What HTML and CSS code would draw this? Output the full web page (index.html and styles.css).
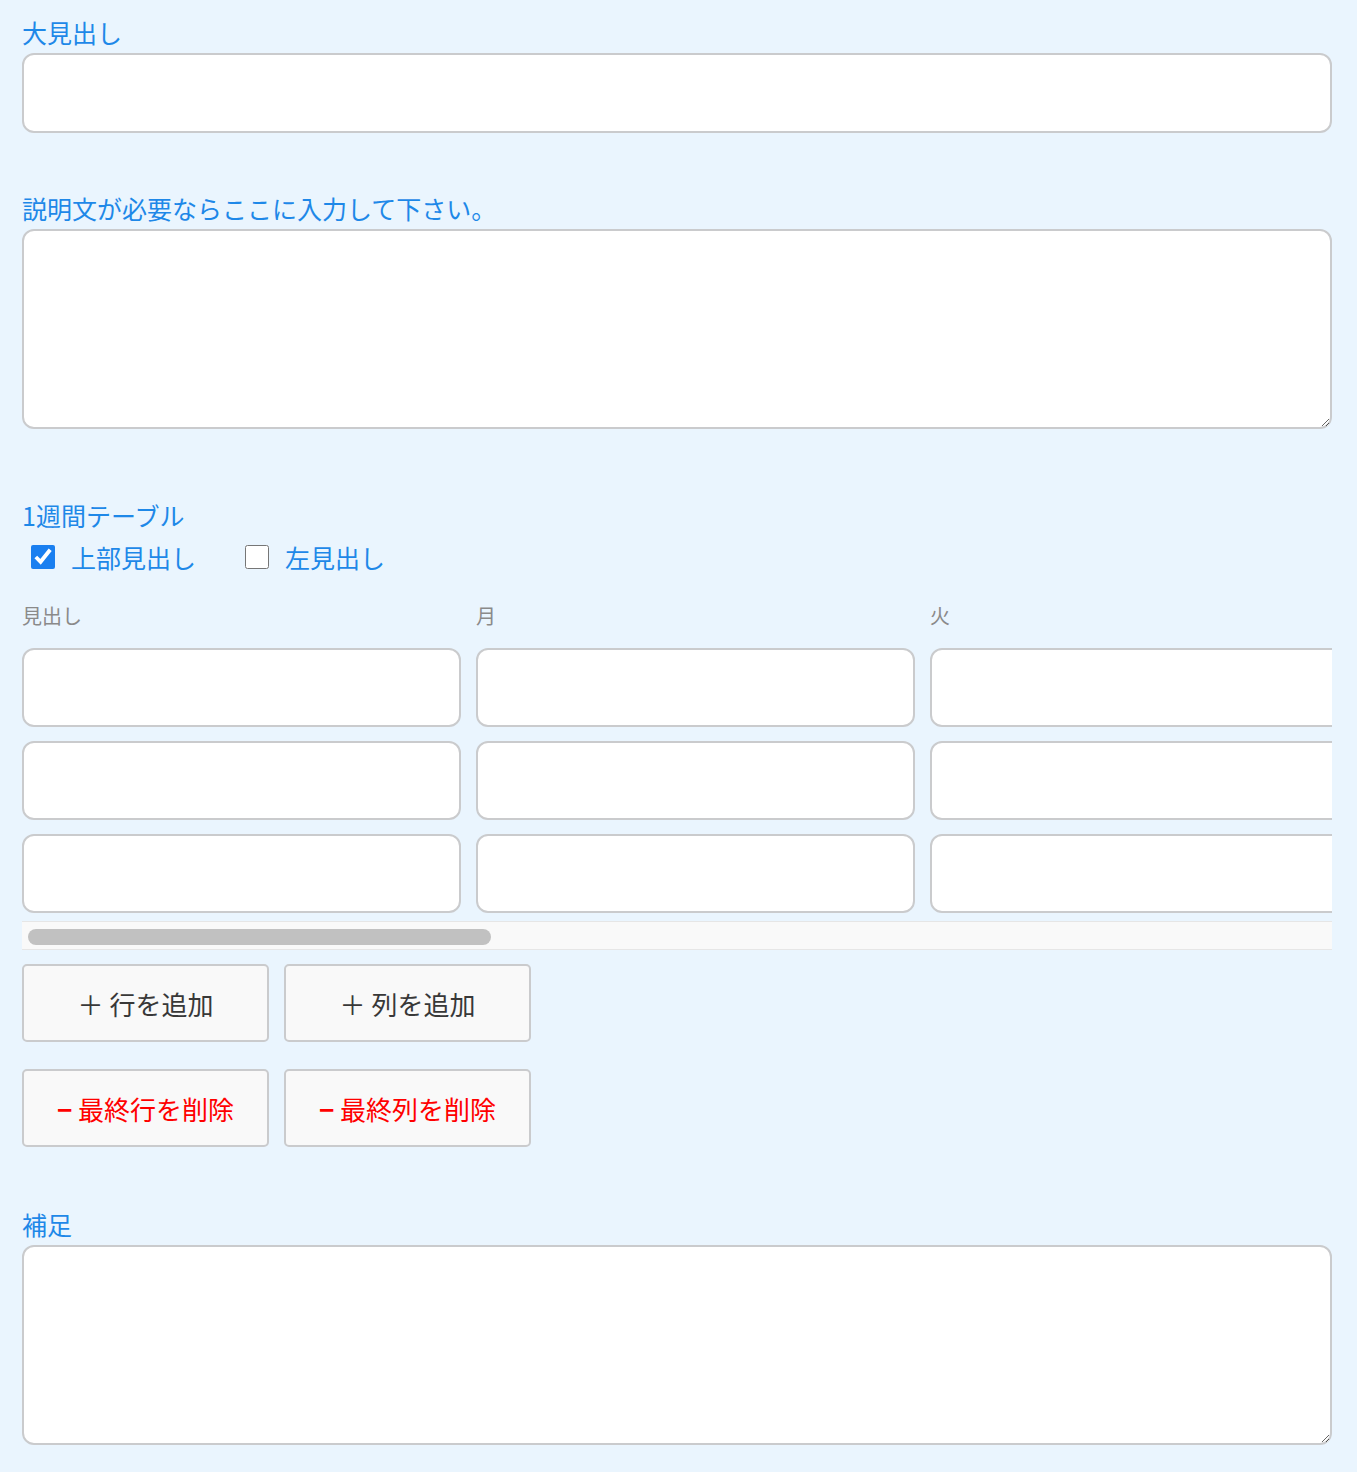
FILE: index.html
```html
<!DOCTYPE html>
<html lang="ja">
<head>
    <meta charset="UTF-8">
    <title>1週間テーブル</title>
    <link rel="stylesheet" href="styles.css">
</head>
<body>
    <div class="page">
        <!-- 大見出し -->
        <div class="field">
            <label class="field-label" for="title">大見出し</label>
            <input type="text" id="title" class="text-input">
        </div>

        <!-- 説明文 -->
        <div class="field">
            <label class="field-label" for="description">説明文が必要ならここに入力して下さい。</label>
            <textarea id="description" class="text-area"></textarea>
        </div>

        <!-- 1週間テーブル -->
        <div class="field table-field">
            <div class="field-label">1週間テーブル</div>
            <div class="check-row">
                <label class="check-item">
                    <input type="checkbox" checked>
                    <span>上部見出し</span>
                </label>
                <label class="check-item">
                    <input type="checkbox">
                    <span>左見出し</span>
                </label>
            </div>

            <div class="table-scroll">
                <div class="table-grid" id="tableGrid"></div>
            </div>
            <!-- 横スクロールバー -->
            <div class="scroll-track">
                <div class="scroll-thumb"></div>
            </div>

            <div class="button-row">
                <button class="table-btn"><span class="sign">＋</span> 行を追加</button>
                <button class="table-btn"><span class="sign">＋</span> 列を追加</button>
            </div>
            <div class="button-row">
                <button class="table-btn danger"><span class="sign">−</span> 最終行を削除</button>
                <button class="table-btn danger"><span class="sign">−</span> 最終列を削除</button>
            </div>
        </div>

        <!-- 補足 -->
        <div class="field note-field">
            <label class="field-label" for="note">補足</label>
            <textarea id="note" class="text-area"></textarea>
        </div>
    </div>

    <script>
        // 見えている列だけ作る（見出し・月・火）
        const headers = ['見出し', '月', '火'];
        const rows = 3;
        const grid = document.getElementById('tableGrid');

        headers.forEach(h => {
            const head = document.createElement('div');
            head.className = 'col-head';
            head.textContent = h;
            grid.appendChild(head);
        });

        for (let r = 0; r < rows; r++) {
            headers.forEach(() => {
                const cell = document.createElement('input');
                cell.type = 'text';
                cell.className = 'cell-input';
                grid.appendChild(cell);
            });
        }
    </script>
</body>
</html>
```

FILE: styles.css
```css
* {
    box-sizing: border-box;
    margin: 0;
    padding: 0;
}
body {
    font-family: "Noto Sans CJK JP", "Noto Sans", sans-serif;
    background-color: #eaf5fe;
    padding-top: 14px;
}
.page {
    width: 1310px;
    margin-left: 22px;
}
.field {
    margin-bottom: 57px;
}
.table-field {
    padding-top: 11px;
}
.note-field {
    padding-top: 2px;
}
.field-label {
    display: block;
    font-size: 25px;
    line-height: 36px;
    color: #1e88e8;
    margin-bottom: 3px;
}
.text-input,
.text-area,
.cell-input {
    display: block;
    width: 100%;
    background: white;
    border: 2px solid #cacbcd;
    border-radius: 12px;
    font-family: inherit;
    font-size: 20px;
    padding: 0 14px;
    outline: none;
}
.text-input {
    height: 80px;
}
.text-area {
    height: 200px;
    padding: 12px 14px;
    resize: vertical;
}
.check-row {
    display: flex;
    gap: 40px;
    height: 36px;
    align-items: center;
    margin-top: 6px;
}
.check-item {
    display: flex;
    align-items: center;
    gap: 16px;
    font-size: 25px;
    color: #1e88e8;
}
.check-item input {
    width: 24px;
    height: 24px;
    margin-left: 9px;
    accent-color: #1a7ff0;
}
.table-scroll {
    overflow: hidden;
    margin-top: 27px;
}
.table-grid {
    display: grid;
    grid-template-columns: repeat(3, 439px);
    column-gap: 15px;
    row-gap: 14px;
    padding-bottom: 8px;
}
.col-head {
    font-size: 20px;
    line-height: 28px;
    color: #8a8a8a;
    margin-bottom: 4px;
}
.cell-input {
    height: 79px;
}
.scroll-track {
    height: 29px;
    background: #f9f9f9;
    border-top: 1px solid #e6e6e6;
    border-bottom: 1px solid #e6e6e6;
    padding: 7px 0 0 6px;
}
.scroll-thumb {
    width: 463px;
    height: 16px;
    border-radius: 8px;
    background: #c1c1c1;
}
.button-row {
    display: flex;
    gap: 15px;
    margin-top: 14px;
}
.button-row + .button-row {
    margin-top: 27px;
}
.table-btn {
    width: 247px;
    height: 78px;
    background-color: #f9f9f9;
    border: 2px solid #cacbcd;
    border-radius: 5px;
    font-family: inherit;
    font-size: 26px;
    color: #383838;
    cursor: pointer;
}
.table-btn.danger {
    color: #f00;
}
.table-btn.danger .sign {
    font-weight: 700;
}
```
